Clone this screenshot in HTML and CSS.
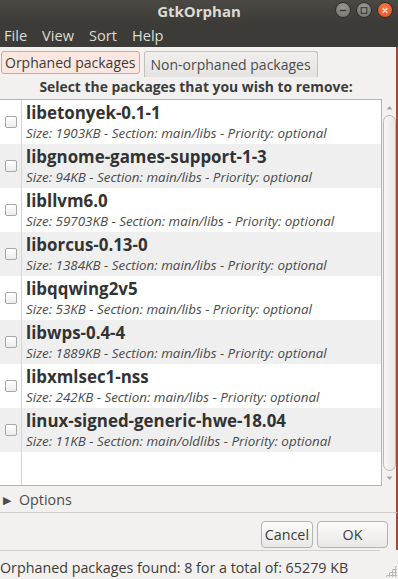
FILE: index.html
```html
<!DOCTYPE html>
<html lang="en">
<head>
    <meta charset="UTF-8">
    <meta name="viewport" content="width=device-width, initial-scale=1.0">
    <title>GtkOrphan</title>
    <link rel="stylesheet" href="styles.css">
</head>
<body>
    <div class="window">
        <header class="titlebar">
            <span class="title">GtkOrphan</span>
            <div class="controls">
                <span class="wbtn wbtn-min"><svg width="15" height="15" viewBox="0 0 15 15"><line x1="4" y1="7.5" x2="11" y2="7.5" stroke="#3c3b37" stroke-width="1.6"/></svg></span>
                <span class="wbtn wbtn-max"><svg width="15" height="15" viewBox="0 0 15 15"><rect x="4.5" y="4.5" width="6" height="6" fill="none" stroke="#3c3b37" stroke-width="1.2"/></svg></span>
                <span class="wbtn wbtn-close"><svg width="15" height="15" viewBox="0 0 15 15"><path d="M5 5 L10 10 M10 5 L5 10" stroke="#fbe0d4" stroke-width="1.4"/></svg></span>
            </div>
        </header>
        <nav class="menubar">
            <span>File</span>
            <span>View</span>
            <span>Sort</span>
            <span>Help</span>
        </nav>
        <div class="tabs">
            <span class="tab active">Orphaned packages</span>
            <span class="tab">Non-orphaned packages</span>
        </div>
        <main class="panel">
            <h2 class="prompt">Select the packages that you wish to remove:</h2>
            <div class="listbox">
                <ul class="packages">
                    <li><span class="check"><i></i></span><div class="info"><b>libetonyek-0.1-1</b><em>Size: 1903KB - Section: main/libs - Priority: optional</em></div></li>
                    <li><span class="check"><i></i></span><div class="info"><b>libgnome-games-support-1-3</b><em>Size: 94KB - Section: main/libs - Priority: optional</em></div></li>
                    <li><span class="check"><i></i></span><div class="info"><b>libllvm6.0</b><em>Size: 59703KB - Section: main/libs - Priority: optional</em></div></li>
                    <li><span class="check"><i></i></span><div class="info"><b>liborcus-0.13-0</b><em>Size: 1384KB - Section: main/libs - Priority: optional</em></div></li>
                    <li><span class="check"><i></i></span><div class="info"><b>libqqwing2v5</b><em>Size: 53KB - Section: main/libs - Priority: optional</em></div></li>
                    <li><span class="check"><i></i></span><div class="info"><b>libwps-0.4-4</b><em>Size: 1889KB - Section: main/libs - Priority: optional</em></div></li>
                    <li><span class="check"><i></i></span><div class="info"><b>libxmlsec1-nss</b><em>Size: 242KB - Section: main/libs - Priority: optional</em></div></li>
                    <li><span class="check"><i></i></span><div class="info"><b>linux-signed-generic-hwe-18.04</b><em>Size: 11KB - Section: main/oldlibs - Priority: optional</em></div></li>
                    <li class="filler"><span class="check"></span></li>
                </ul>
                <div class="scrollbar">
                    <span class="arrow"><svg width="7" height="5" viewBox="0 0 7 5"><path d="M0.5 4.5 L3.5 1 L6.5 4.5Z" fill="#a9a7a3"/></svg></span>
                    <span class="thumb"></span>
                    <span class="arrow"><svg width="7" height="5" viewBox="0 0 7 5"><path d="M0.5 0.5 L3.5 4 L6.5 0.5Z" fill="#a9a7a3"/></svg></span>
                </div>
            </div>
            <div class="options"><span class="tri">&#9654;</span>Options</div>
        </main>
        <div class="buttons">
            <button class="btn">Cancel</button>
            <button class="btn btn-ok">OK</button>
        </div>
        <footer class="status">
            <span>Orphaned packages found: 8 for a total of: 65279 KB</span>
            <span class="grip"></span>
        </footer>
    </div>
</body>
</html>
```

FILE: styles.css
```css
* {
    box-sizing: border-box;
}
body {
    margin: 0;
    font-family: "Open Sans", "DejaVu Sans", sans-serif;
    font-size: 14px;
    color: #3c3c3c;
    background: #f2f1f0;
}
.window {
    width: 398px;
    height: 579px;
    display: flex;
    flex-direction: column;
    background: #f2f1f0;
    overflow: hidden;
}
.titlebar {
    height: 23px;
    background: linear-gradient(#4a4944, #3c3b37);
    display: flex;
    align-items: center;
    justify-content: center;
    position: relative;
}
.title {
    color: #dfdbd2;
    font-weight: bold;
    font-size: 15px;
    margin-top: -2px;
}
.controls {
    position: absolute;
    right: 5px;
    top: 2px;
    display: flex;
    gap: 5px;
}
.wbtn {
    width: 16px;
    height: 16px;
    border-radius: 50%;
    display: flex;
    align-items: center;
    justify-content: center;
    background: radial-gradient(circle at 50% 35%, #9d9b95, #6e6c67);
    border: 1px solid #2f2e2a;
}
.wbtn-close {
    background: radial-gradient(circle at 50% 35%, #f77a4c, #e0521c);
}
.menubar {
    height: 24px;
    background: #3c3b37;
    display: flex;
    align-items: center;
    gap: 15px;
    padding-left: 4px;
    color: #dfdbd2;
    font-size: 14.6px;
}
.tabs {
    height: 30px;
    display: flex;
    align-items: flex-end;
    gap: 4px;
    padding: 0 0 0 1px;
    border-right: 2px solid #a04a38;
}
.tab {
    height: 26px;
    padding: 0 6px;
    display: flex;
    align-items: center;
    border: 1px solid #c3c1bc;
    border-bottom: none;
    border-radius: 3px 3px 0 0;
    background: linear-gradient(#f0efee, #e4e3e1);
    font-size: 14px;
    color: #4c4c4c;
}
.tab.active {
    height: 23px;
    margin-bottom: 3px;
    border: 1px solid #e7a08a;
    border-radius: 3px;
    background: #fbe7df;
    padding: 0 3px;
    color: #3c3c3c;
}
.panel {
    display: flex;
    flex-direction: column;
    border-right: 2px solid #a04a38;
    border-bottom: 1px solid #cfcdc9;
    height: 436px;
}
.prompt {
    margin: 0;
    height: 22px;
    font-size: 13.9px;
    font-weight: bold;
    text-align: center;
    line-height: 20px;
    padding-right: 4px;
    color: #3c3c3c;
}
.listbox {
    display: flex;
    height: 388px;
}
.packages {
    list-style: none;
    margin: 0;
    padding: 0;
    width: 382px;
    background: #fff;
    border: 1px solid #b5b3af;
    border-left: none;
    display: flex;
    flex-direction: column;
}
.packages li {
    height: 44px;
    display: flex;
    flex-shrink: 0;
}
.packages li:nth-child(even) {
    background: #efefef;
}
.packages li.filler {
    flex: 1;
    background: #fff;
}
.check {
    width: 22px;
    border-right: 1px solid #d6d5d2;
    display: flex;
    align-items: center;
    padding-left: 5px;
}
.check i {
    width: 12px;
    height: 12px;
    border: 1px solid #a9a7a3;
    border-radius: 2px;
    background: linear-gradient(#ffffff, #ececec);
}
.info {
    display: flex;
    flex-direction: column;
    padding: 2px 0 0 4px;
}
.info b {
    font-size: 16.9px;
    line-height: 22px;
    color: #333;
}
.info em {
    font-size: 13.4px;
    line-height: 18px;
    color: #4a4a4a;
}
.scrollbar {
    width: 14px;
    display: flex;
    flex-direction: column;
    align-items: center;
    padding-top: 1px;
}
.arrow {
    width: 13px;
    height: 15px;
    display: flex;
    align-items: center;
    justify-content: center;
}
.thumb {
    flex: 1;
    width: 13px;
    border: 1px solid #bcbab6;
    border-radius: 7px;
    background: linear-gradient(90deg, #f7f7f6, #e9e8e6);
}
.options {
    height: 26px;
    display: flex;
    align-items: center;
    padding-left: 3px;
    font-size: 14.3px;
    color: #4c4c4c;
}
.tri {
    font-size: 11px;
    width: 16px;
    color: #4c4c4c;
}
.buttons {
    height: 37px;
    display: flex;
    justify-content: flex-end;
    align-items: flex-end;
    gap: 4px;
    padding: 0 8px 2px 0;
    border-right: 2px solid #a04a38;
}
.btn {
    height: 27px;
    border: 1px solid #b4b2ae;
    border-radius: 4px;
    background: linear-gradient(#fbfbfa, #e9e8e6);
    font-family: inherit;
    font-size: 14.3px;
    color: #3c3c3c;
    padding: 0 3px;
}
.btn-ok {
    width: 71px;
}
.status {
    flex: 1;
    display: flex;
    align-items: center;
    justify-content: space-between;
    padding-top: 4px;
    font-size: 14.3px;
    color: #3c3c3c;
    border-top: 1px solid #d3d1cd;
    margin-right: 18px;
    position: relative;
}
.grip {
    position: absolute;
    right: -17px;
    bottom: 2px;
    width: 12px;
    height: 12px;
    background-image: radial-gradient(circle, #b9b7b3 1px, transparent 1.2px);
    background-size: 3px 3px;
    clip-path: polygon(100% 0, 100% 100%, 0 100%);
}
```
